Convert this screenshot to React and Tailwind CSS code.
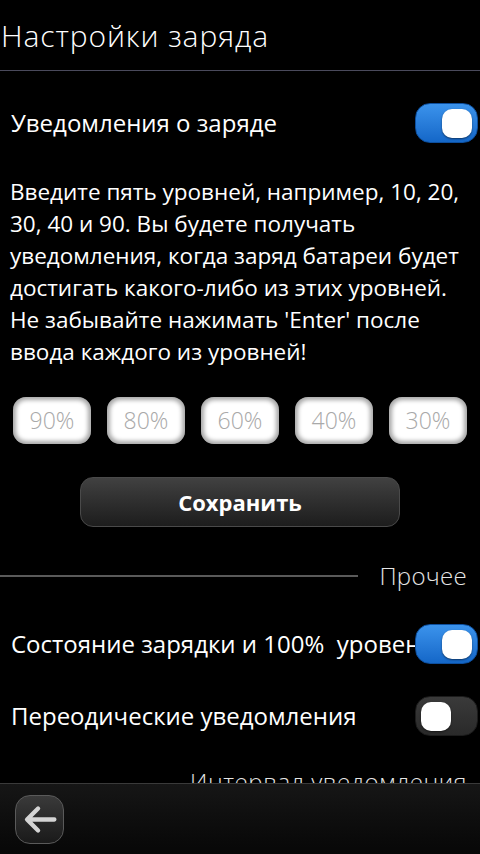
import { useState } from 'react';

const FONT = { fontFamily: '"Open Sans", "Noto Sans", sans-serif' };

const Toggle = ({ on }) => (
  <div
    className={
      'relative z-10 shrink-0 w-[63px] h-[40px] rounded-[15px] p-[5px] flex items-center border ' +
      (on
        ? 'bg-gradient-to-b from-[#3b93ec] to-[#1467c8] border-[#0d4f9e] justify-end'
        : 'bg-gradient-to-b from-[#3a3a3a] to-[#2a2a2a] border-[#1c1c1c] justify-start')
    }
  >
    <div className="w-[30px] h-[29px] rounded-[10px] bg-white shadow-[0_1px_2px_rgba(0,0,0,0.5)]" />
  </div>
);

const LevelInput = ({ value }) => (
  <div className="w-[78px] h-[47px] rounded-[13px] bg-white shadow-[inset_0_0_4px_3px_rgba(0,0,0,0.35)] flex items-center justify-center">
    <span className="text-[23px] font-light text-[#a9a9a9]">{value}</span>
  </div>
);

const levels = ['90%', '80%', '60%', '40%', '30%'];

const hint = [
  'Введите пять уровней, например, 10, 20,',
  '30, 40 и 90. Вы будете получать',
  'уведомления, когда заряд батареи будет',
  'достигать какого-либо из этих уровней.',
  "Не забывайте нажимать 'Enter' после",
  'ввода каждого из уровней!',
];

export default function App() {
  const [notify] = useState(true);

  return (
    <div className="w-[480px] h-[854px] bg-black text-white flex flex-col overflow-hidden" style={FONT}>
      <div className="flex-1 min-h-0 overflow-hidden">
        {/* header */}
        <div className="h-[71px] flex items-center border-b border-[#4a4a5c]">
          <h1 className="pl-[1px] text-[30px] font-light tracking-[0.9px] text-white">Настройки заряда</h1>
        </div>

        <div className="h-[104px] flex items-center justify-between pl-[11px] pr-[2px]">
          <span className="text-[24px]">Уведомления о заряде</span>
          <Toggle on={notify} />
        </div>

        <p className="pl-[10px] text-[22.5px] leading-[32px] mt-[1px] whitespace-nowrap">
          {hint.map((line) => (
            <span key={line} className="block">
              {line}
            </span>
          ))}
        </p>

        <div className="flex justify-between px-[13px] mt-[29px]">
          {levels.map((l) => (
            <LevelInput key={l} value={l} />
          ))}
        </div>

        <div className="flex justify-center mt-[33px]">
          <button className="w-[320px] h-[50px] rounded-[13px] bg-gradient-to-b from-[#414141] to-[#1d1d1d] border border-[#4a4a4a] text-[22px] font-bold text-white">
            Сохранить
          </button>
        </div>

        <div className="h-[33px] flex items-center mt-[32px]">
          <div className="w-[358px] h-[2px] bg-[#5a5a5a]" />
          <span className="ml-auto pr-[13px] text-[24px] font-light tracking-[0.3px] text-[#e6e6e6]">Прочее</span>
        </div>

        <div className="h-[72px] flex items-center pl-[11px] pr-[2px] mt-[16px]">
          <span className="flex-1 min-w-0 overflow-hidden whitespace-nowrap text-[24px]">
            Состояние зарядки и 100%&nbsp;&nbsp;уровень
          </span>
          <Toggle on />
        </div>

        <div className="h-[72px] flex items-center justify-between pl-[11px] pr-[2px]">
          <span className="text-[24px]">Переодические уведомления</span>
          <Toggle on={false} />
        </div>

        <div className="flex justify-end pr-[13px] mt-[13px]">
          <span className="text-[24px] leading-[33px] font-light tracking-[0.6px] text-[#e6e6e6]">
            Интервал уведомления
          </span>
        </div>
      </div>

      {/* toolbar */}
      <div className="h-[71px] shrink-0 border-t border-[#3a3a3a] bg-gradient-to-b from-[#161616] to-[#070707] flex items-center pl-[15px]">
        <button className="w-[49px] h-[49px] rounded-[15px] border border-[#5a5a5a] bg-gradient-to-b from-[#3a3a3a] to-[#1a1a1a] flex items-center justify-center">
          <svg width="49" height="49" viewBox="0 0 49 49" fill="none">
            <path d="M40 24.5H12M23 13L11.5 24.5L23 36" stroke="#d4d4d4" strokeWidth="4.5" strokeLinecap="round" strokeLinejoin="round" />
          </svg>
        </button>
      </div>
    </div>
  );
}
